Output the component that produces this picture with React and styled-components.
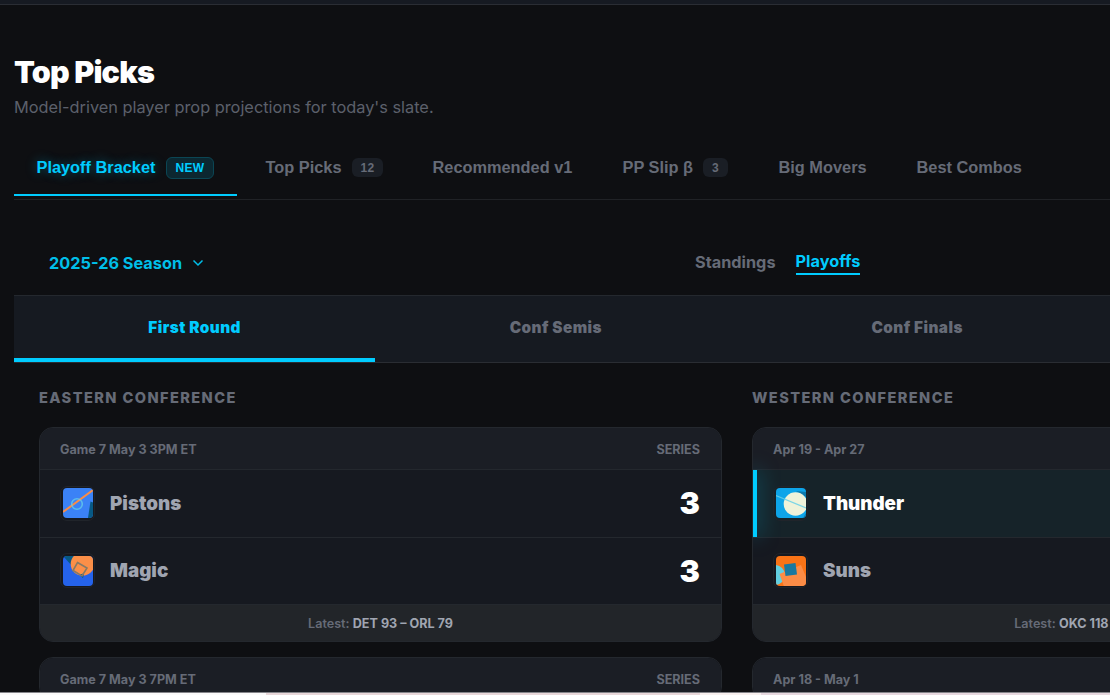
import styled, { createGlobalStyle } from "styled-components";

const CYAN = "#00ccff";
const MUTED = "#666b77";
const LINE = "#24282e";
const BUTTON_FONT = `"Liberation Sans", Arial, sans-serif`;

const tabs = [
  { label: "Playoff Bracket", badge: "NEW", active: true, width: 223 },
  { label: "Top Picks", badge: "12", width: 161 },
  { label: "Recommended v1", width: 184 },
  { label: "PP Slip β", badge: "3", width: 150 },
  { label: "Big Movers", width: 132 },
  { label: "Best Combos", width: 150 },
];

const rounds = ["First Round", "Conf Semis", "Conf Finals", "Finals"];

const east = [
  {
    when: "Game 7 May 3 3PM ET",
    teams: [
      { name: "Pistons", wins: 3, logo: "pistons" },
      { name: "Magic", wins: 3, logo: "magic" },
    ],
    latest: "DET 93 – ORL 79",
  },
  { when: "Game 7 May 3 7PM ET", teams: [] },
];

const west = [
  {
    when: "Apr 19 - Apr 27",
    teams: [
      { name: "Thunder", wins: 4, logo: "thunder", winner: true },
      { name: "Suns", wins: 0, logo: "suns" },
    ],
    latest: "OKC 118 – PHX 109",
  },
  { when: "Apr 18 - May 1", teams: [] },
];

function Logo({ team }) {
  return (
    <LogoFrame>
      <svg width="30" height="30" viewBox="0 0 30 30">
        {team === "pistons" && (
          <>
            <rect width="30" height="30" fill="#3b82f6" />
            <path d="M27.5 13.5L30 14.5V30H25Z" fill="#075985" />
            <path d="M0 24L30 2" stroke="#fb8c46" strokeWidth="2" />
            <circle cx="14" cy="16" r="5.3" fill="none" stroke="#67cfe8" strokeOpacity="0.75" strokeWidth="1.6" />
          </>
        )}
        {team === "magic" && (
          <>
            <rect width="30" height="30" fill="#2563eb" />
            <path d="M0 0H12L20 22Z" fill="#075985" />
            <circle cx="19.5" cy="8" r="11.8" fill="#fb8f48" />
            <path d="M16 18.5L21 17.5L20 22Z" fill="#075985" />
            <path d="M14.5 6.5L24 12L19 20L10 14.5Z" fill="none" stroke="#857a66" strokeWidth="1.6" />
          </>
        )}
        {team === "thunder" && (
          <>
            <rect width="30" height="30" fill="#0ea5e9" />
            <path d="M20 3L30 4V9Z" fill="#0e7aac" />
            <path d="M27 30L30 25V30Z" fill="#0e7aac" />
            <circle cx="19.5" cy="16" r="11.8" fill="#f0f3da" />
            <path d="M0 7.5L30 20" stroke="#67d0e7" strokeOpacity="0.85" strokeWidth="1.2" />
          </>
        )}
        {team === "suns" && (
          <>
            <rect width="30" height="30" fill="#f97316" />
            <circle cx="-1" cy="19" r="10" fill="#62cfe0" />
            <path d="M3.5 18L25 9L33 28L10 36Z" fill="#fb8c46" />
            <path d="M8 8.5L19.5 7L21 18.5L9.5 20Z" fill="#1878a0" />
          </>
        )}
      </svg>
    </LogoFrame>
  );
}

function SeriesCard({ series }) {
  return (
    <Card>
      <CardHead>
        <span>{series.when}</span>
        <span>SERIES</span>
      </CardHead>
      {series.teams.map((team) => (
        <TeamRow key={team.name} $winner={team.winner}>
          {team.winner && <WinnerBar />}
          <Logo team={team.logo} />
          <TeamName $winner={team.winner}>{team.name}</TeamName>
          <Wins>{team.wins}</Wins>
        </TeamRow>
      ))}
      {series.latest && (
        <Latest>
          Latest: <b>{series.latest}</b>
        </Latest>
      )}
    </Card>
  );
}

export default function App() {
  return (
    <Page>
      <GlobalStyle />
      <TopBar />
      <Content>
        <Title>Top Picks</Title>
        <Subtitle>Model-driven player prop projections for today's slate.</Subtitle>
        <Tabs>
          {tabs.map((tab) => (
            <Tab key={tab.label} $active={tab.active} $width={tab.width}>
              {tab.label}
              {tab.badge && <Badge $active={tab.active}>{tab.badge}</Badge>}
            </Tab>
          ))}
        </Tabs>
        <SeasonBar>
          <Season>
            2025-26 Season
            <svg width="12" height="12" viewBox="0 0 12 12" fill="none">
              <path d="M1.5 3.5L6 8L10.5 3.5" stroke="currentColor" strokeWidth="1.5" />
            </svg>
          </Season>
          <Views>
            <View>Standings</View>
            <View $active>Playoffs</View>
          </Views>
        </SeasonBar>
        <Rounds>
          {rounds.map((round, i) => (
            <Round key={round} $active={i === 0}>
              {round}
            </Round>
          ))}
        </Rounds>
        <Bracket>
          <Conference>
            <ConferenceTitle>EASTERN CONFERENCE</ConferenceTitle>
            {east.map((series) => (
              <SeriesCard key={series.when} series={series} />
            ))}
          </Conference>
          <Conference>
            <ConferenceTitle>WESTERN CONFERENCE</ConferenceTitle>
            {west.map((series) => (
              <SeriesCard key={series.when} series={series} />
            ))}
          </Conference>
        </Bracket>
      </Content>
      <BottomStrip />
    </Page>
  );
}

const GlobalStyle = createGlobalStyle`
  * {
    box-sizing: border-box;
  }
  body {
    margin: 0;
    overflow: hidden;
    background: #0e0f12;
    font-family: Inter, "Liberation Sans", sans-serif;
  }
`;

const Page = styled.div`
  display: flex;
  flex-direction: column;
  height: 695px;
  overflow: hidden;
  background: #0e0f12;
`;

const TopBar = styled.div`
  flex: none;
  height: 5px;
  background: #161a22;
  border-bottom: 1px solid #2a2d34;
`;

const Content = styled.main`
  flex: 1;
  min-height: 0;
  width: 1460px;
  padding: 49px 0 0 14px;
  overflow: hidden;
`;

const Title = styled.h1`
  margin: 0;
  height: 37px;
  line-height: 35px;
  font-size: 30.5px;
  font-weight: 900;
  letter-spacing: -0.8px;
  color: #fff;
`;

const Subtitle = styled.p`
  margin: 4px 0 0;
  height: 24px;
  line-height: 24px;
  font-size: 16.33px;
  color: #5c606b;
`;

const Tabs = styled.nav`
  display: flex;
  height: 62px;
  margin-top: 19px;
  border-bottom: 1px solid #202226;
`;

const Tab = styled.div`
  flex: none;
  display: flex;
  align-items: center;
  gap: 10px;
  width: ${(props) => props.$width}px;
  height: 58px;
  padding: 3px 0 0 22.5px;
  margin-right: 6px;
  border-bottom: 2px solid ${(props) => (props.$active ? CYAN : "transparent")};
  font-family: ${BUTTON_FONT};
  font-size: 16.35px;
  font-weight: 600;
  color: ${(props) => (props.$active ? CYAN : MUTED)};
  text-shadow: ${(props) => (props.$active ? "0 0 12px rgba(0, 204, 255, 0.4)" : "none")};
  white-space: nowrap;
`;

const Badge = styled.span`
  height: ${(props) => (props.$active ? 22 : 19)}px;
  line-height: ${(props) => (props.$active ? 21 : 20)}px;
  padding: 0 9px;
  border-radius: 6px;
  border: ${(props) => (props.$active ? "1px solid #0b4654" : "none")};
  background: ${(props) => (props.$active ? "#0c2730" : "#1a1e25")};
  font-size: 12px;
  font-weight: 700;
  letter-spacing: 0.25px;
  text-shadow: none;
`;

const SeasonBar = styled.div`
  display: flex;
  height: 95px;
  padding: 31px 0 0 35px;
`;

const Season = styled.div`
  display: flex;
  align-items: center;
  gap: 10px;
  width: 646px;
  height: 64px;
  font-size: 16.3px;
  font-weight: 700;
  color: #00bfe9;
`;

const Views = styled.div`
  display: flex;
  gap: 20px;
  align-items: center;
  height: 61px;
`;

const View = styled.span`
  height: 27px;
  line-height: ${(props) => (props.$active ? 26 : 28)}px;
  border-bottom: ${(props) => (props.$active ? `2px solid ${CYAN}` : "none")};
  font-size: 16.3px;
  font-weight: ${(props) => (props.$active ? 700 : 650)};
  color: ${(props) => (props.$active ? CYAN : MUTED)};
`;

const Rounds = styled.div`
  display: flex;
  width: 1445px;
  height: 68px;
  background: #161a21;
  border-top: 1px solid ${LINE};
  border-bottom: 1px solid #2a2d33;
`;

const Round = styled.div`
  flex: 1;
  padding-bottom: 2px;
  line-height: 63px;
  border-bottom: 4px solid ${(props) => (props.$active ? CYAN : "transparent")};
  text-align: center;
  font-size: 15.3px;
  font-weight: 900;
  letter-spacing: 0.45px;
  color: ${(props) => (props.$active ? CYAN : MUTED)};
`;

const Bracket = styled.div`
  display: flex;
  gap: 30px;
  padding: 25px 25px 0;
`;

const Conference = styled.section`
  flex: 1;
`;

const ConferenceTitle = styled.h2`
  margin: 0 0 19px;
  line-height: 20px;
  font-size: 14.6px;
  font-weight: 800;
  letter-spacing: 1.4px;
  color: ${MUTED};
`;

const Card = styled.article`
  margin-bottom: 15px;
  overflow: hidden;
  background: #161920;
  border: 1px solid ${LINE};
  border-radius: 14px;
`;

const CardHead = styled.header`
  display: flex;
  align-items: center;
  justify-content: space-between;
  height: 42px;
  padding: 1px 21px 0 20px;
  background: #1b1e25;
  border-bottom: 1px solid ${LINE};
  font-size: 12.6px;
  font-weight: 700;
  color: ${MUTED};
`;

const TeamRow = styled.div`
  position: relative;
  display: flex;
  align-items: center;
  height: 67.5px;
  padding: 0 21px 0 20px;
  border-bottom: 1px solid ${LINE};
  background: ${(props) => (props.$winner ? "#162329" : "none")};
`;

const WinnerBar = styled.span`
  position: absolute;
  inset: 0 auto 0 0;
  width: 4px;
  background: ${CYAN};
  box-shadow: 0 0 20px rgba(0, 204, 255, 0.6);
`;

const LogoFrame = styled.span`
  display: flex;
  align-items: center;
  justify-content: center;
  width: 35px;
  height: 35px;
  border: 1px solid #20242a;
  border-radius: 7px;

  svg {
    border-radius: 4px;
  }
`;

const TeamName = styled.span`
  flex: 1;
  padding-left: 15px;
  font-size: 18.8px;
  font-weight: 900;
  color: ${(props) => (props.$winner ? "#fff" : "#a0a5b1")};
`;

const Wins = styled.span`
  font-size: 30.5px;
  font-weight: 900;
  line-height: 36px;
  color: #fff;
`;

const Latest = styled.footer`
  height: 36px;
  line-height: 38px;
  background: #222529;
  text-align: center;
  font-size: 12.6px;
  font-weight: 600;
  color: ${MUTED};

  b {
    font-weight: 700;
    color: #a0a5b1;
  }
`;

const BottomStrip = styled.div`
  flex: none;
  height: 3px;
  border-top: 1px solid #85858a;
  background: linear-gradient(
    90deg,
    #fbfafa 266px,
    #e8d7d9 266px 700px,
    #f8f0ef 700px 761px,
    #e7d8df 761px
  );
`;
